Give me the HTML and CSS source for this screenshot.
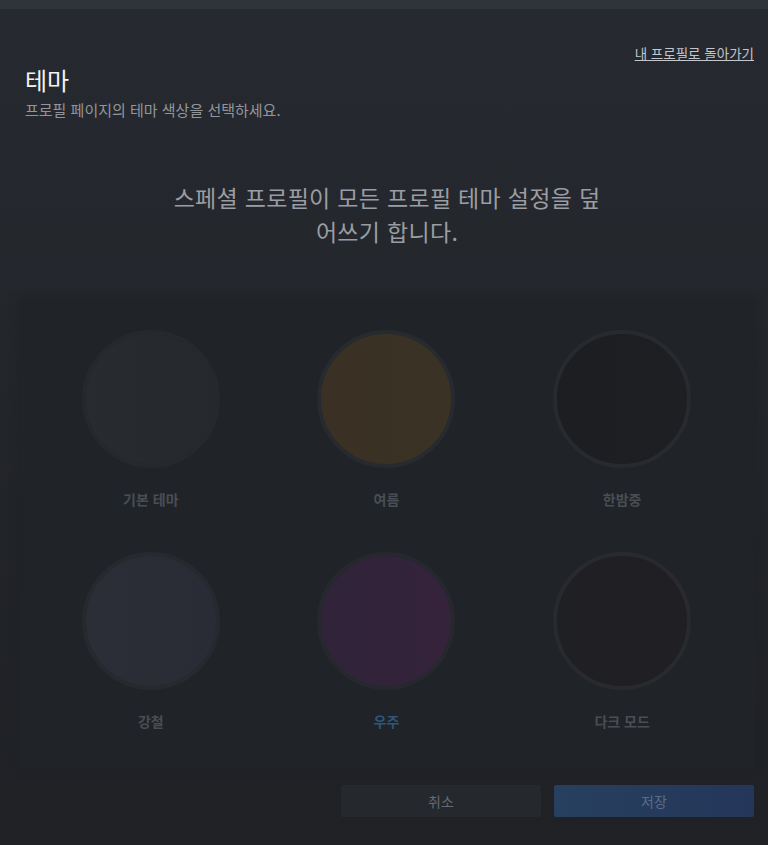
FILE: index.html
```html
<!DOCTYPE html>
<html lang="ko">
<head>
    <meta charset="UTF-8">
    <meta name="viewport" content="width=device-width, initial-scale=1.0">
    <title>테마</title>
    <link rel="stylesheet" href="styles.css">
</head>
<body>
    <div class="topbar"></div>
    <div class="container">
        <div class="header-links">
            <a href="#" class="back-link">내 프로필로 돌아가기</a>
        </div>
        <h1>테마</h1>
        <p class="subtitle">프로필 페이지의 테마 색상을 선택하세요.</p>

        <div class="locked">
            <p class="locked-notice">스페셜 프로필이 모든 프로필 테마 설정을 덮어쓰기 합니다.</p>
            <div class="theme-grid">
                <div class="theme-option">
                    <div class="swatch swatch-default"></div>
                    <span class="theme-name">기본 테마</span>
                </div>
                <div class="theme-option">
                    <div class="swatch swatch-summer"></div>
                    <span class="theme-name">여름</span>
                </div>
                <div class="theme-option">
                    <div class="swatch swatch-midnight"></div>
                    <span class="theme-name">한밤중</span>
                </div>
                <div class="theme-option">
                    <div class="swatch swatch-steel"></div>
                    <span class="theme-name">강철</span>
                </div>
                <div class="theme-option selected">
                    <div class="swatch swatch-cosmic"></div>
                    <span class="theme-name">우주</span>
                </div>
                <div class="theme-option">
                    <div class="swatch swatch-dark"></div>
                    <span class="theme-name">다크 모드</span>
                </div>
            </div>
        </div>

        <div class="actions">
            <button type="button" class="btn btn-cancel">취소</button>
            <button type="button" class="btn btn-save">저장</button>
        </div>
    </div>
</body>
</html>
```

FILE: styles.css
```css
body {
    font-family: "Noto Sans CJK KR", "Noto Sans", sans-serif;
    background: linear-gradient(180deg, #262a30 0%, #23262b 40%, #1f2125 100%);
    margin: 0;
    padding: 0;
    min-height: 845px;
    color: #c6c9cd;
}
.topbar {
    height: 9px;
    background-color: #2f333b;
}
.container {
    padding: 0 14px 0 20px;
}
.header-links {
    display: flex;
    justify-content: flex-end;
    margin-top: 35px;
    height: 18px;
}
.back-link {
    font-size: 13.5px;
    line-height: 18px;
    color: #c2c5c9;
    text-decoration: underline;
}
.container h1 {
    margin: 2px 0 0 5px;
    font-size: 24px;
    line-height: 32px;
    font-weight: 400;
    color: #f2f3f4;
}
.subtitle {
    margin: 4px 0 0 5px;
    font-size: 15px;
    line-height: 20px;
    color: #92969c;
}
.locked-notice {
    max-width: 436px;
    margin: 60px auto 0;
    font-size: 23px;
    line-height: 34px;
    text-align: center;
    color: #9a9da2;
    letter-spacing: 0.3px;
}
.theme-grid {
    margin-top: 52px;
    display: grid;
    grid-template-columns: repeat(3, 1fr);
    row-gap: 43px;
    padding: 30px 14px 37px 13px;
    background-color: #202327;
    box-shadow: 0 0 6px 2px #202327;
}
.theme-option {
    display: flex;
    flex-direction: column;
    align-items: center;
}
.swatch {
    width: 130px;
    height: 130px;
    border-radius: 50%;
    border: 4px solid #272a2f;
}
.swatch-default {
    background: linear-gradient(90deg, #282b2f, #25282c);
    border-color: #25282c;
}
.swatch-summer {
    background: linear-gradient(90deg, #3a3124, #3b3226);
    border-color: #272a2f;
}
.swatch-midnight {
    background: linear-gradient(90deg, #1c1e22, #1d1f23);
    border-color: #282a2f;
}
.swatch-steel {
    background: linear-gradient(90deg, #2b2e35, #292c36);
    border-color: #26292e;
}
.swatch-cosmic {
    background: linear-gradient(90deg, #30233a, #35233a);
    border-color: #25282d;
}
.swatch-dark {
    background: linear-gradient(90deg, #1f2023, #201f23);
    border-color: #282a2e;
}
.theme-name {
    margin-top: 21px;
    font-size: 14px;
    line-height: 20px;
    font-weight: 700;
    color: #4a4e54;
}
.theme-option.selected .theme-name {
    color: #2c577c;
}
.actions {
    display: flex;
    justify-content: flex-end;
    gap: 13px;
    margin-top: 17px;
}
.btn {
    width: 200px;
    height: 32px;
    border: none;
    border-radius: 2px;
    font-family: inherit;
    font-size: 14px;
    cursor: pointer;
}
.btn-cancel {
    background-color: #25282d;
    color: #66696e;
}
.btn-save {
    background: linear-gradient(90deg, #27405f, #24365a);
    color: #5b6d86;
}
```
